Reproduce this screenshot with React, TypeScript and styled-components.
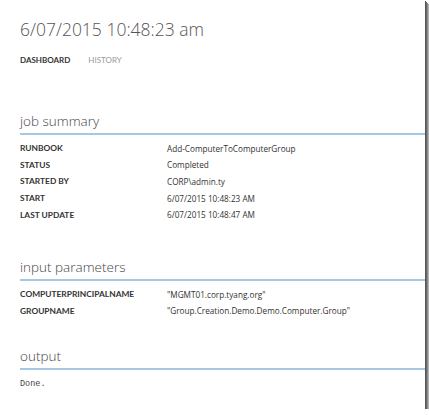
import React from "react";
import styled, { createGlobalStyle } from "styled-components";

const Global = createGlobalStyle`
  html, body { margin: 0; padding: 0; background: #ffffff; }
  body { font-family: "Open Sans", Lato, sans-serif; }
`;

const Frame = styled.div`
  box-sizing: border-box;
  width: 425px;
  height: 409px;
  background: #fff;
  box-shadow: 1px 1px 0 #555, 2px 2px 0 #6a6a6a, 3px 3px 0 #8a8a8a, 4px 4px 0 #b5b5b5;
  padding: 17px 0 0 20px;
  overflow: hidden;
`;

const Title = styled.h1`
  margin: 0;
  font-size: 17.5px;
  line-height: 24px;
  font-weight: 300;
  color: #555;
`;

const Tabs = styled.nav`
  display: flex;
  gap: 18px;
  margin-top: 13px;
`;

const Tab = styled.span<{ $active?: boolean }>`
  font-family: Lato, sans-serif;
  font-size: 8px;
  line-height: 12px;
  font-weight: ${(p) => (p.$active ? 700 : 400)};
  color: ${(p) => (p.$active ? "#333" : "#999")};
  text-transform: uppercase;
`;

const Section = styled.section<{ $top: number }>`
  margin-top: ${(p) => p.$top}px;
`;

const Heading = styled.h2`
  margin: 0;
  font-size: 13.5px;
  line-height: 20px;
  font-weight: 300;
  color: #444;
  padding-bottom: 2px;
  border-bottom: 2px solid #a6c8e6;
`;

const Rows = styled.div`
  display: grid;
  grid-template-columns: 147px 1fr;
  grid-auto-rows: 16.6px;
  margin-top: 5px;
  align-items: center;
`;

const Label = styled.div`
  font-family: Lato, sans-serif;
  font-size: 8.4px;
  font-weight: 700;
  color: #333;
  text-transform: uppercase;
  white-space: nowrap;
`;

const Value = styled.div`
  font-size: 8.2px;
  color: #333;
  white-space: nowrap;
`;

const Output = styled.pre`
  margin: 9px 0 0;
  font-family: "Liberation Mono", "DejaVu Sans Mono", monospace;
  font-size: 8.5px;
  color: #444;
`;

const summary: [string, string][] = [
  ["Runbook", "Add-ComputerToComputerGroup"],
  ["Status", "Completed"],
  ["Started by", "CORP\\admin.ty"],
  ["Start", "6/07/2015 10:48:23 AM"],
  ["Last update", "6/07/2015 10:48:47 AM"],
];

const params: [string, string][] = [
  ["ComputerPrincipalName", "\"MGMT01.corp.tyang.org\""],
  ["GroupName", "\"Group.Creation.Demo.Demo.Computer.Group\""],
];

function KeyValues({ items }: { items: [string, string][] }) {
  return (
    <Rows>
      {items.map(([k, v]) => (
        <React.Fragment key={k}>
          <Label>{k}</Label>
          <Value>{v}</Value>
        </React.Fragment>
      ))}
    </Rows>
  );
}

export default function App() {
  return (
    <>
      <Global />
      <Frame>
        <Title>6/07/2015 10:48:23 am</Title>
        <Tabs>
          <Tab $active>Dashboard</Tab>
          <Tab>History</Tab>
        </Tabs>
        <Section $top={45}>
          <Heading>job summary</Heading>
          <KeyValues items={summary} />
        </Section>
        <Section $top={34}>
          <Heading>input parameters</Heading>
          <KeyValues items={params} />
        </Section>
        <Section $top={27}>
          <Heading>output</Heading>
          <Output>Done.</Output>
        </Section>
      </Frame>
    </>
  );
}
